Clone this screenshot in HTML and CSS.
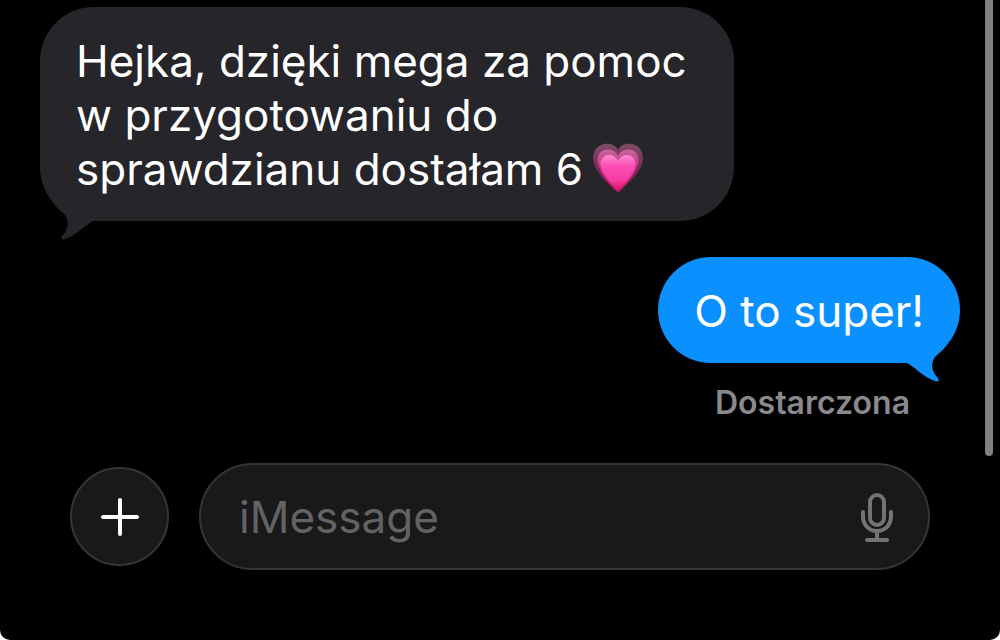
FILE: index.html
```html
<!DOCTYPE html>
<html lang="pl">
<head>
    <meta charset="UTF-8">
    <meta name="viewport" content="width=device-width, initial-scale=1.0">
    <title>iMessage</title>
    <link rel="stylesheet" href="styles.css">
</head>
<body>

    <div class="screen">
        <main class="thread">
            <div class="message received">
                <p>Hejka, dzięki mega za pomoc w przygotowaniu do sprawdzianu dostałam 6<svg class="heart" viewBox="0 0 50 50" role="img" aria-label="Serce">
                    <defs>
                        <linearGradient id="heartFill" x1="0" y1="0" x2="0" y2="1">
                            <stop offset="0" stop-color="#ff8fd0"/>
                            <stop offset="0.3" stop-color="#fb4fb4"/>
                            <stop offset="0.7" stop-color="#f53aa3"/>
                            <stop offset="1" stop-color="#d01568"/>
                        </linearGradient>
                        <linearGradient id="heartOuter" x1="0" y1="0" x2="0" y2="1">
                            <stop offset="0" stop-color="#7d4c68"/>
                            <stop offset="0.5" stop-color="#7c2a57"/>
                            <stop offset="1" stop-color="#a91556"/>
                        </linearGradient>
                        <linearGradient id="heartMiddle" x1="0" y1="0" x2="0" y2="1">
                            <stop offset="0" stop-color="#c5659b"/>
                            <stop offset="0.5" stop-color="#c9307f"/>
                            <stop offset="1" stop-color="#c2165f"/>
                        </linearGradient>
                    </defs>
                    <path fill="url(#heartOuter)" d="M25 7C21 0 13 0 8 2C2 5 0 10 0 16C1 29 14 39 25 50C36 39 49 29 50 16C50 10 48 5 42 2C37 0 29 0 25 7Z"/>
                    <path fill="url(#heartMiddle)" d="M25 13C22 6 14 5 9 8C4 11 4 17 5 21C8 32 17 41 25 49C33 41 42 32 45 21C46 17 46 11 41 8C36 5 28 6 25 13Z"/>
                    <path fill="url(#heartFill)" d="M25 18C22 12 16 11 12 13C8 15 7 20 8 24C10 33 19 41 25 48C31 41 40 33 42 24C43 20 42 15 38 13C34 11 28 12 25 18Z"/>
                </svg></p>
                <svg class="tail" viewBox="0 0 50 40" aria-hidden="true">
                    <path d="M10 4C13 8 18 12 21 15C26 22 24 30 18 36C16 39 18 40 21 39C33 35 40 26 49 21L50 0Z"/>
                </svg>
            </div>

            <div class="message sent">
                <p>O to super!</p>
                <svg class="tail" viewBox="0 0 50 40" aria-hidden="true">
                    <path d="M10 4C13 8 18 12 21 15C26 22 24 30 18 36C16 39 18 40 21 39C33 35 40 26 49 21L50 0Z"/>
                </svg>
            </div>
            <div class="status">Dostarczona</div>
        </main>

        <form class="composer">
            <button class="add-btn" type="button" aria-label="Dodaj">
                <svg viewBox="0 0 40 40" aria-hidden="true"><path d="M20 3V37M3 20H37"/></svg>
            </button>
            <div class="field">
                <input type="text" id="message" placeholder="iMessage" aria-label="iMessage">
                <button class="mic-btn" type="button" aria-label="Dyktuj">
                    <svg viewBox="0 0 34 50" aria-hidden="true">
                        <rect x="10" y="3" width="14" height="30" rx="7"/>
                        <path d="M3 20V24C3 33 9 39 17 39S31 33 31 24V20M17 39V48M7 48H27"/>
                    </svg>
                </button>
            </div>
        </form>

        <div class="scrollbar"></div>
    </div>

</body>
</html>
```
FILE: styles.css
```css
* {
    box-sizing: border-box;
}
body {
    margin: 0;
    background-color: #fff;
    font-family: Inter, "Liberation Sans", sans-serif;
    font-size: 44px;
    line-height: 54px;
    color: #fff;
}
.screen {
    position: relative;
    min-height: 100vh;
    background-color: #000;
    border-radius: 0 0 10px 10px;
    overflow: hidden;
}
.thread {
    display: flex;
    flex-direction: column;
    padding: 7px 40px 0;
}
.message {
    position: relative;
    padding: 27px 36px 25px;
    border-radius: 54px;
}
.message p {
    margin: 0;
}
.received {
    align-self: flex-start;
    width: 694px;
    max-width: 100%;
    background-color: #26252a;
}
.sent {
    align-self: flex-end;
    margin-top: 36px;
    background-color: #0a91ff;
}
.tail {
    position: absolute;
    bottom: -19px;
    left: 4px;
    width: 50px;
    height: 40px;
    fill: #26252a;
}
.sent .tail {
    left: auto;
    right: 4px;
    fill: #0a91ff;
    transform: scaleX(-1);
}
.heart {
    width: 50px;
    height: 50px;
    margin: -8px 0 -8px 10px;
    vertical-align: 0;
}
.status {
    align-self: flex-end;
    margin-top: 20px;
    padding-right: 50px;
    font-size: 32px;
    font-weight: 600;
    line-height: 40px;
    color: #8a898e;
}
.composer {
    display: flex;
    align-items: center;
    gap: 30px;
    margin-top: 40px;
    padding: 0 70px;
}
button {
    display: flex;
    align-items: center;
    justify-content: center;
    padding: 0;
    border: none;
    background: none;
    cursor: pointer;
}
button svg {
    fill: none;
    stroke-linecap: round;
    stroke-linejoin: round;
}
.add-btn {
    flex: none;
    width: 99px;
    height: 99px;
    border: 2px solid #353535;
    border-radius: 50%;
    background-color: #191919;
}
.add-btn svg {
    width: 40px;
    height: 40px;
    stroke: #fff;
    stroke-width: 4;
}
.field {
    display: flex;
    align-items: center;
    flex: 1;
    min-width: 0;
    padding: 24px 34px 24px 38px;
    border: 2px solid #353535;
    border-radius: 54px;
    background-color: #191919;
}
.field input {
    flex: 1;
    min-width: 0;
    height: 55px;
    padding: 0;
    border: none;
    outline: none;
    background: none;
    font: inherit;
    color: #fff;
}
.field input::placeholder {
    color: #636366;
    opacity: 1;
}
.mic-btn svg {
    width: 34px;
    height: 50px;
    stroke: #737376;
    stroke-width: 4;
    overflow: visible;
}
.scrollbar {
    position: absolute;
    top: 0;
    right: 7px;
    width: 8px;
    height: 456px;
    border-radius: 0 0 4px 4px;
    background-color: #808080;
}
```
